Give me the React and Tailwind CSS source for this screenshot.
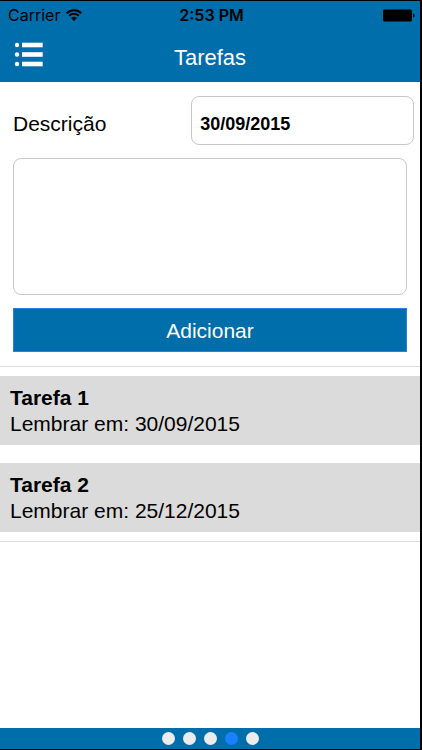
import { useState } from 'react';

const INITIAL_TASKS = [
  { id: 1, name: 'Tarefa 1', date: '30/09/2015' },
  { id: 2, name: 'Tarefa 2', date: '25/12/2015' },
];

const PAGES = ['Página 1', 'Página 2', 'Página 3', 'Tarefas', 'Página 5'];

function WifiIcon() {
  return (
    <svg viewBox="0 0 16 12" className="w-4 h-3" fill="none" stroke="currentColor" strokeWidth="2" aria-hidden="true">
      <path d="M0.7 4.2a10.3 10.3 0 0 1 14.6 0" />
      <path d="M3.2 6.8a6.8 6.8 0 0 1 9.6 0" />
      <path d="M8 12 5.1 9.1a4.1 4.1 0 0 1 5.8 0z" fill="currentColor" stroke="none" />
    </svg>
  );
}

function BatteryIcon() {
  return (
    <svg viewBox="0 0 32 13" className="w-8 h-[13px]" fill="currentColor" aria-hidden="true">
      <rect x="0" y="0.5" width="29" height="12" rx="1.5" />
      <path d="M30 4.5c2.2 0.6 2.2 3.4 0 4z" />
    </svg>
  );
}

function ListIcon() {
  return (
    <svg viewBox="0 0 29 25" className="w-[29px] h-[25px]" fill="currentColor" aria-hidden="true">
      {[3, 12.5, 22].map((y) => (
        <g key={y}>
          <circle cx="3" cy={y} r="2.2" />
          <rect x="8" y={y - 2.3} width="20.7" height="4.6" />
        </g>
      ))}
    </svg>
  );
}

function StatusBar() {
  return (
    <div className="grid grid-cols-3 items-center h-7 pl-2 pr-[5px] text-black font-[Inter,sans-serif] text-base leading-7">
      <div className="flex items-center gap-[6px]">
        <span>Carrier</span>
        <WifiIcon />
      </div>
      <span className="text-center font-semibold">2:53 PM</span>
      <div className="flex justify-end">
        <BatteryIcon />
      </div>
    </div>
  );
}

function TaskItem({ task }) {
  return (
    <li className="px-[10px] pt-[9px] pb-2 bg-[#dbdbdb] text-[21px] leading-[26px]">
      <h2 className="font-bold">{task.name}</h2>
      <p>Lembrar em: {task.date}</p>
    </li>
  );
}

export default function App() {
  const [tasks, setTasks] = useState(INITIAL_TASKS);
  const [date, setDate] = useState('30/09/2015');
  const [description, setDescription] = useState('');
  const [page, setPage] = useState(3);

  const handleSubmit = (e) => {
    e.preventDefault();
    if (!description.trim()) return;
    setTasks((prev) => [...prev, { id: Date.now(), name: description.trim(), date }]);
    setDescription('');
  };

  return (
    <div className="flex flex-col min-h-screen bg-white border-black border-t border-b border-r-2 text-black font-['Liberation_Sans',Arial,sans-serif]">
      <header className="bg-[#006eaa] text-white">
        <StatusBar />
        <div className="grid grid-cols-3 items-center h-[53px] px-[14px]">
          <button type="button" aria-label="Menu" className="justify-self-start pb-[2px] cursor-pointer">
            <ListIcon />
          </button>
          <h1 className="pt-1 text-center text-[22px] leading-7">Tarefas</h1>
        </div>
      </header>

      <main className="grow">
        <form onSubmit={handleSubmit} className="pt-[14px] pb-[14px] border-b border-[#dcdce2]">
          <div className="flex items-center pl-[13px] pr-[6px]">
            <label htmlFor="description" className="grow pt-[6px] text-[21px]">Descrição</label>
            <input
              type="text"
              aria-label="Data"
              value={date}
              onChange={(e) => setDate(e.target.value)}
              className="w-5/9 h-[49px] px-2 pt-2 border border-[#c8c8c8] rounded-lg text-lg font-bold"
            />
          </div>
          <div className="flex flex-col gap-[13px] px-[13px] pt-[13px]">
            <textarea
              id="description"
              value={description}
              onChange={(e) => setDescription(e.target.value)}
              className="block w-full h-[137px] p-2 border border-[#c8c8c8] rounded-lg text-[21px] resize-none"
            />
            <button
              type="submit"
              className="w-full h-11 pt-[2px] bg-[#006eaa] border border-[#2a80e0] text-white text-[21px] cursor-pointer"
            >
              Adicionar
            </button>
          </div>
        </form>

        <ul className="flex flex-col gap-[18px] py-[9px] border-b border-[#dcdce2]">
          {tasks.map((task) => (
            <TaskItem key={task.id} task={task} />
          ))}
        </ul>
      </main>

      <nav className="flex items-center justify-center gap-2 h-[21px] bg-[#006eaa]">
        {PAGES.map((name, i) => (
          <button
            key={name}
            type="button"
            aria-label={name}
            onClick={() => setPage(i)}
            className={`w-[13px] h-[13px] rounded-full cursor-pointer ${i === page ? 'bg-[#1a80ff]' : 'bg-[#ececec]'}`}
          />
        ))}
      </nav>
    </div>
  );
}
